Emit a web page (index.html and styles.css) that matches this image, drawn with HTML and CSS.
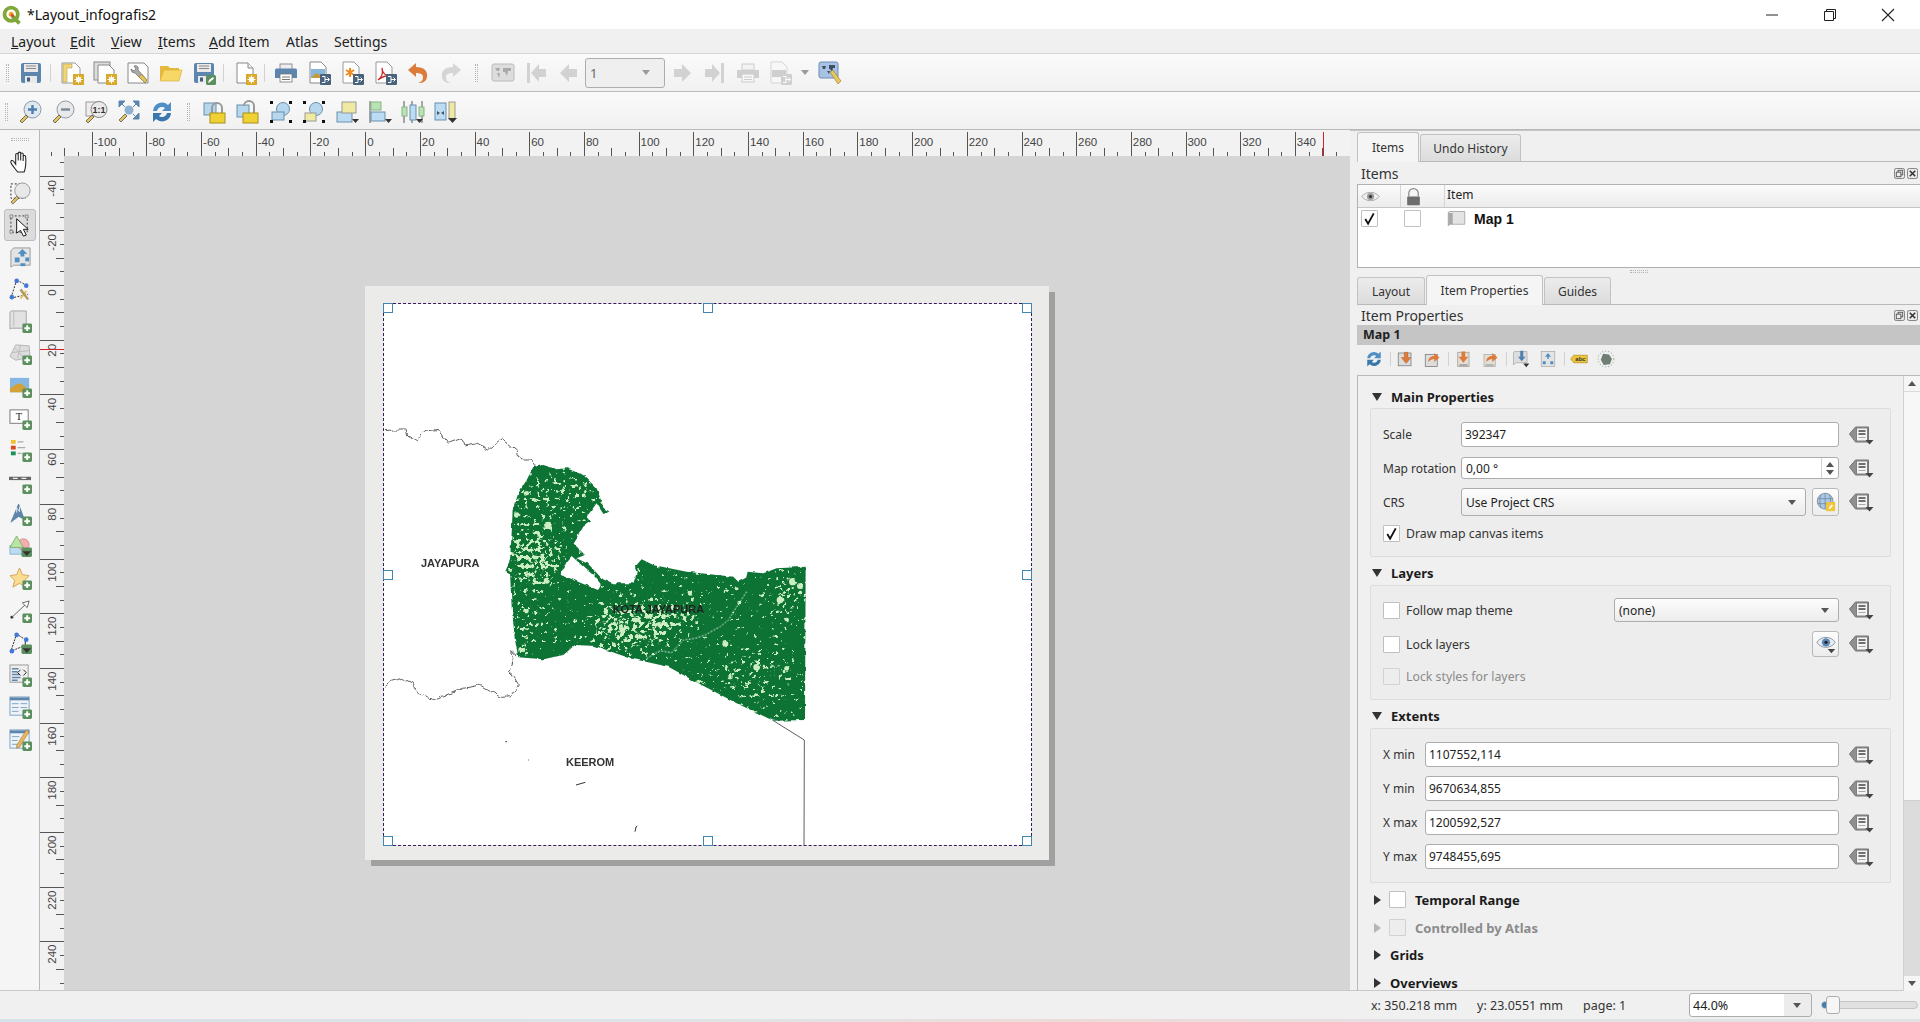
FILE: index.html
```html
<!DOCTYPE html>
<html lang="en">
<head>
    <meta charset="UTF-8">
    <title>*Layout_infografis2</title>
    <link rel="stylesheet" href="styles.css">
</head>
<body>

<svg class="sprite" xmlns="http://www.w3.org/2000/svg">
    <!-- badges -->
    <symbol id="b-plus" viewBox="0 0 24 24"><rect x="14" y="14" width="10" height="10" rx="1.5" fill="#5b8f5e"/><path d="M19 16v6M16 19h6" stroke="#fff" stroke-width="2"/></symbol>
    <symbol id="b-plus-dd" viewBox="0 0 24 24"><rect x="13" y="13" width="11" height="10" rx="1.5" fill="#5b8f5e"/><path d="M14 17h9l-4.500 5z" fill="#333"/></symbol>
    <symbol id="b-gear" viewBox="0 0 24 24"><rect x="13" y="13" width="11" height="11" fill="#d8a928"/><circle cx="18.500" cy="18.500" r="2.500" fill="#fff"/><path d="M18.500 14.500v8M14.500 18.500h8M15.700 15.700l5.600 5.600M21.300 15.700l-5.600 5.600" stroke="#fff"/></symbol>
    <symbol id="b-export" viewBox="0 0 24 24"><rect x="13" y="13" width="11" height="11" rx="1" fill="#4a637d"/><path d="M15 15.500h3v6h-3M18 18.500h4M20.500 16.500l2 2-2 2" fill="none" stroke="#fff"/></symbol>
    <!-- main toolbars -->
    <symbol id="i-save" viewBox="0 0 24 24"><rect x="2" y="2" width="20" height="20" rx="2" fill="#5d86ae"/><rect x="5" y="3" width="14" height="8" fill="#e9e9e9"/><path d="M7 5h10M7 7.500h10" stroke="#8a8a8a"/><rect x="6" y="15" width="12" height="7" fill="#e9e9e9"/><rect x="8" y="16.500" width="3" height="4" fill="#3f5f80"/></symbol>
    <symbol id="i-saveas" viewBox="0 0 24 24"><use href="#i-save"/><rect x="14" y="14" width="10" height="10" rx="1.500" fill="#5b8f5e"/><path d="M16 22l1-3 4-3 1 1.500-4 3.500z" fill="#fff"/></symbol>
    <symbol id="i-newlayout" viewBox="0 0 24 24"><path d="M2 2h13l5 5v15H2z" fill="#fff" stroke="#999"/><path d="M3 3h9v4H7v14H3z" fill="#f0d676" stroke="#b8a14a" stroke-width=".6"/><use href="#b-gear"/></symbol>
    <symbol id="i-duplicate" viewBox="0 0 24 24"><rect x="1" y="1" width="16" height="18" fill="#ddd" stroke="#888"/><path d="M5 4h11l5 5v13H5z" fill="#fff" stroke="#888"/><use href="#b-gear"/></symbol>
    <symbol id="i-manager" viewBox="0 0 24 24"><path d="M2 2h16l4 4v16H2z" fill="#fff" stroke="#888"/><path d="M8 5c3-1 5 1 4 4l9 10-2 3-10-10c-3 0-4-2-4-4l3 2 2-2z" fill="#aaa" stroke="#555" stroke-width=".6"/><path d="M15 13l6 6-2 3-6-6z" fill="#e3c35a" stroke="#8e7a33" stroke-width=".6"/></symbol>
    <symbol id="i-open" viewBox="0 0 24 24"><path d="M1 20V5h8l2 2h9v3H6z" fill="#e6b93f"/><path d="M1 20l4-11h18l-3 11z" fill="#f7d765" stroke="#d7ab35" stroke-width=".6"/></symbol>
    <symbol id="i-newreport" viewBox="0 0 24 24"><path d="M4 2h11l5 5v15H4z" fill="#fff" stroke="#888"/><path d="M15 2v5h5" fill="#eee" stroke="#888"/><use href="#b-gear"/></symbol>
    <symbol id="i-print" viewBox="0 0 24 24"><rect x="6" y="3" width="12" height="6" fill="#eee" stroke="#777" stroke-width=".8"/><path d="M1 9a1.500 1.500 0 0 1 1.500-1.500h19A1.500 1.500 0 0 1 23 9v8H1z" fill="#5c86ad"/><rect x="6" y="13" width="12" height="8" fill="#fff" stroke="#777" stroke-width=".8"/><path d="M8 16h8M8 18.500h8" stroke="#777"/></symbol>
    <symbol id="i-eximage" viewBox="0 0 24 24"><path d="M3 1h11l5 5v16H3z" fill="#fff" stroke="#888"/><rect x="4" y="8" width="14" height="9" fill="#87b6dc"/><path d="M4 17l5-5 4 2 5 3z" fill="#c6993a"/><use href="#b-export"/></symbol>
    <symbol id="i-exsvg" viewBox="0 0 24 24"><path d="M3 1h11l5 5v16H3z" fill="#fff" stroke="#999"/><path d="M10 7v9M6 9l8 5M14 9l-8 5" stroke="#f08a1d" stroke-width="2"/><use href="#b-export"/></symbol>
    <symbol id="i-expdf" viewBox="0 0 24 24"><path d="M3 1h11l5 5v16H3z" fill="#fff" stroke="#999"/><path d="M5 19c4-3 5-8 4-12 0 5 4 8 8 8-4-1-8 1-12 4z" fill="none" stroke="#c9282d" stroke-width="1.300"/><use href="#b-export"/></symbol>
    <symbol id="i-undo" viewBox="0 0 24 24"><path d="M2 9l8-7v4c8 0 12 4 11 10s-6 6-9 6c4-1 5-3 5-6s-3-4-7-4v4z" fill="#dd7b3a"/></symbol>
    <symbol id="i-redo" viewBox="0 0 24 24"><path d="M22 9l-8-7v4C6 6 2 10 3 16s6 6 9 6c-4-1-5-3-5-6s3-4 7-4v4z" fill="#d5d5d5"/></symbol>
    <symbol id="i-atlasprev" viewBox="0 0 24 24"><rect x="1" y="3" width="22" height="17" rx="2" fill="#ddd" stroke="#bbb"/><path d="M4 7h5l-1 3H6zM12 7h8v3h-3l-1 5-2-4h-2zM6 12l2 5 1-5z" fill="#a9a9a9"/></symbol>
    <symbol id="i-first" viewBox="0 0 24 24"><path d="M3 2h3v20H3zM7 12l8-9v5h7v8h-7v5z" fill="#d2d2d2"/></symbol>
    <symbol id="i-prev" viewBox="0 0 24 24"><path d="M3 12l9-9v5h8v8h-8v5z" fill="#d2d2d2"/></symbol>
    <symbol id="i-next" viewBox="0 0 24 24"><path d="M21 12l-9-9v5H4v8h8v5z" fill="#d2d2d2"/></symbol>
    <symbol id="i-last" viewBox="0 0 24 24"><path d="M21 2h-3v20h3zM17 12l-8-9v5H2v8h7v5z" fill="#d2d2d2"/></symbol>
    <symbol id="i-printoff" viewBox="0 0 24 24"><rect x="6" y="3" width="12" height="6" fill="#f3f3f3" stroke="#ccc"/><path d="M1 9h22v8H1z" fill="#cfcfcf"/><rect x="6" y="13" width="12" height="8" fill="#f7f7f7" stroke="#ccc"/><path d="M8 16h8M8 18.500h8" stroke="#ccc"/></symbol>
    <symbol id="i-exportoff" viewBox="0 0 24 24"><path d="M2 1h11l5 5v16H2z" fill="#f7f7f7" stroke="#d5d5d5"/><rect x="3" y="9" width="14" height="7" fill="#cfcfcf"/><rect x="12" y="13" width="11" height="11" rx="1" fill="#d0d0d0"/><path d="M14 15.500h3v6h-3M17 18.500h4M19.500 16.500l2 2-2 2" fill="none" stroke="#fff"/></symbol>
    <symbol id="i-atlasset" viewBox="0 0 24 24"><rect x="1" y="1" width="19" height="16" rx="2" fill="#a7c2e3" stroke="#6d8db3"/><path d="M4 5h4l-1 3H5zM11 4h6v3h-2l-1 4-2-3h-1zM9 10l2 3 1-3z" fill="#3d4f66"/><path d="M12 11l3-2 8 11-3 3z" fill="#e9c65c" stroke="#8e7a33" stroke-width=".6"/></symbol>
    <symbol id="i-zoomin" viewBox="0 0 24 24"><circle cx="14.500" cy="9.500" r="8.500" fill="#dfe7ef" stroke="#8a99a8"/><path d="M14.500 5v9M10 9.500h9" stroke="#4d7fb0" stroke-width="2.400"/><path d="M8 15l-6 6 2 2 6-6z" fill="#e3c35a" stroke="#444" stroke-width=".7"/></symbol>
    <symbol id="i-zoomout" viewBox="0 0 24 24"><circle cx="14.500" cy="9.500" r="8.500" fill="#e9e9e9" stroke="#8a99a8"/><path d="M10 9.500h9" stroke="#7b8996" stroke-width="2.400"/><path d="M8 15l-6 6 2 2 6-6z" fill="#e3c35a" stroke="#444" stroke-width=".7"/></symbol>
    <symbol id="i-zoomact" viewBox="0 0 24 24"><rect x="2" y="2" width="14" height="14" fill="#eee" stroke="#999"/><circle cx="15" cy="9.500" r="8" fill="#e9e9e9" stroke="#888"/><path d="M8 15l-6 6 2 2 6-6z" fill="#e3c35a" stroke="#444" stroke-width=".7"/><text x="15" y="13" font-family="Liberation Sans" font-size="9" font-weight="700" text-anchor="middle" fill="#333">1:1</text></symbol>
    <symbol id="i-zoomfull" viewBox="0 0 24 24"><path d="M2 1h6L2 7zM22 1h-6l6 6zM22 19h-6l6-6zM8 7l-4-4M16 7l4-4M16 14l4 4" fill="#5d86ae" stroke="#5d86ae"/><circle cx="12" cy="10" r="4.500" fill="#8fb0cf"/><path d="M8 14l-6 6 2 2 6-6z" fill="#e3c35a" stroke="#444" stroke-width=".7"/></symbol>
    <symbol id="i-refresh" viewBox="0 0 24 24"><path d="M3 11a9 9 0 0 1 15-6l3-3v9h-9l3-3a5 5 0 0 0-8 3z" fill="#4f8fc6"/><path d="M21 13a9 9 0 0 1-15 6l-3 3v-9h9l-3 3a5 5 0 0 0 8-3z" fill="#3a77ad"/></symbol>
    <symbol id="i-lock" viewBox="0 0 24 24"><rect x="1" y="3" width="12" height="12" fill="#b6d7ee" stroke="#6a8fab"/><path d="M9 14V8a5 5 0 0 1 10 0v6" fill="none" stroke="#999" stroke-width="2"/><rect x="7" y="13" width="15" height="10" fill="#f0d133" stroke="#a8901c"/></symbol>
    <symbol id="i-unlock" viewBox="0 0 24 24"><rect x="1" y="5" width="12" height="12" fill="#b6d7ee" stroke="#6a8fab"/><path d="M8 6a5 5 0 0 1 10 0v7" fill="none" stroke="#999" stroke-width="2"/><rect x="7" y="13" width="15" height="10" fill="#f0d133" stroke="#a8901c"/></symbol>
    <symbol id="i-group" viewBox="0 0 24 24"><circle cx="14" cy="9" r="6.500" fill="#b6d7ee" stroke="#6a8fab"/><rect x="3" y="12" width="12" height="8" fill="#b6d7ee" stroke="#6a8fab"/><path d="M1 1h3v3H1zM20 1h3v3h-3zM1 20h3v3H1zM20 20h3v3h-3z" fill="#111"/></symbol>
    <symbol id="i-ungroup" viewBox="0 0 24 24"><circle cx="14" cy="9" r="6.500" fill="#b6d7ee" stroke="#6a8fab"/><rect x="3" y="13" width="11" height="8" fill="#efe9a2" stroke="#999"/><path d="M1 1h3v3H1zM20 1h3v3h-3zM1 20h3v3H1zM20 20h3v3h-3z" fill="#111"/></symbol>
    <symbol id="i-raise" viewBox="0 0 24 24"><rect x="2" y="12" width="15" height="10" fill="#bcdcf3" stroke="#6a8fab"/><rect x="7" y="2" width="14" height="11" fill="#efe9a2" stroke="#999"/><path d="M17 19h7l-3.500 4z" fill="#333"/></symbol>
    <symbol id="i-align" viewBox="0 0 24 24"><path d="M2 1v22" stroke="#555"/><rect x="3" y="2" width="10" height="8" fill="#b8e4b4" stroke="#8ab386"/><rect x="3" y="12" width="14" height="9" fill="#bcdcf3" stroke="#6a8fab"/><path d="M17 19h7l-3.500 4z" fill="#333"/></symbol>
    <symbol id="i-distribute" viewBox="0 0 24 24"><path d="M3 1v22M11 1v22M21 1v22" stroke="#555"/><rect x="1" y="7" width="5" height="9" fill="#b8e4b4" stroke="#8ab386"/><rect x="9" y="5" width="6" height="15" fill="#bcdcf3" stroke="#6a8fab"/><rect x="18" y="7" width="5" height="9" fill="#b8e4b4" stroke="#8ab386"/><path d="M15 19h7l-3.500 4z" fill="#333"/></symbol>
    <symbol id="i-resize" viewBox="0 0 24 24"><rect x="1" y="3" width="11" height="17" fill="#bcdcf3" stroke="#6a8fab"/><path d="M3 11l3 2-3 2zM10 11l-3 2 3 2z" fill="#456"/><rect x="15" y="2" width="6" height="17" fill="#efe9a2" stroke="#999"/><path d="M14 18h9l-4.500 5z" fill="#333"/></symbol>
    <!-- left toolbar -->
    <symbol id="i-pan" viewBox="0 0 24 24"><path d="M9 23c-2-3-6-7-7-10-.5-2 1-3 3-1l2 3V5a1.300 1.300 0 0 1 2.600 0v6V3.500a1.300 1.300 0 0 1 2.600 0V11V4.500a1.300 1.300 0 0 1 2.600 0V11.500V7a1.300 1.300 0 0 1 2.600 0c.4 5 .6 10-1.600 16z" fill="#fff" stroke="#222" stroke-width="1.100"/></symbol>
    <symbol id="i-zoombox" viewBox="0 0 24 24"><rect x="2" y="2" width="15" height="15" fill="none" stroke="#222" stroke-dasharray="2 2"/><circle cx="14" cy="9" r="8" fill="#e8e8e8" stroke="#999"/><path d="M8 15l-6 6 2 2 6-6z" fill="#e3c35a" stroke="#444" stroke-width=".7"/></symbol>
    <symbol id="i-select" viewBox="0 0 24 24"><rect x="2" y="2" width="17" height="17" fill="none" stroke="#333" stroke-dasharray="2 2"/><path d="M1 1h3v3H1zM17 1h3v3h-3zM1 17h3v3H1z" fill="#dde" stroke="#556" stroke-width=".6"/><path d="M8 5v15l4-3 3 6 3-1-3-6h5z" fill="#fff" stroke="#111"/></symbol>
    <symbol id="i-movecontent" viewBox="0 0 24 24"><path d="M2 5l3-3h17v18H5l-3 2z" fill="#e4e4e4" stroke="#999"/><path d="M14 3l5 5h-3v3h-4V8H9z" fill="#4f8fc6"/><rect x="6" y="12" width="5" height="5" fill="#4f8fc6"/><rect x="17" y="12" width="4" height="4" fill="#4f8fc6"/><rect x="12" y="18" width="5" height="3" fill="#4f8fc6"/></symbol>
    <symbol id="i-nodes" viewBox="0 0 24 24"><path d="M8 2l9 5M8 2L2 21M2 21L20 17" fill="none" stroke="#222" stroke-dasharray="2 1.500"/><circle cx="8" cy="3" r="2.400" fill="#3f78d8"/><circle cx="18" cy="8" r="2.400" fill="#3f78d8"/><circle cx="3" cy="20" r="2.400" fill="#3f78d8"/><path d="M11 21l6-8 2 1-6 8z" fill="#e3c35a"/><path d="M13 11l8 11-2 1-8-10z" fill="#b39868"/></symbol>
    <symbol id="i-addmap" viewBox="0 0 24 24"><path d="M1 20V3a2 2 0 0 1 2-2h15v18H4a3 2 0 0 0-3 1z" fill="#e2e2e2" stroke="#a5a5a5"/><path d="M5 1v16" stroke="#bbb"/><use href="#b-plus"/></symbol>
    <symbol id="i-add3d" viewBox="0 0 24 24"><path d="M1 15L7 3l14 1 1 12-15 3z" fill="#ddd" stroke="#b5b5b5"/><path d="M6 6l9 10M12 3l-3 14M3 11l18-2" stroke="#bbb"/><use href="#b-plus"/></symbol>
    <symbol id="i-addpic" viewBox="0 0 24 24"><rect x="1" y="3" width="20" height="15" fill="#84b8e2"/><path d="M1 18V14c5-4 9-6 12-5l8 7v2z" fill="#d4a138"/><use href="#b-plus"/></symbol>
    <symbol id="i-addlabel" viewBox="0 0 24 24"><rect x="1" y="3" width="19" height="14" fill="#fff" stroke="#777"/><text x="10.500" y="14" font-family="Liberation Serif" font-size="11" text-anchor="middle" fill="#222">T</text><use href="#b-plus"/></symbol>
    <symbol id="i-addlegend" viewBox="0 0 24 24"><rect x="2" y="1" width="5" height="4" fill="#f2c12e"/><rect x="2" y="7" width="5" height="4" fill="#d8491f"/><rect x="2" y="13" width="5" height="4" fill="#16915a"/><path d="M9 3h6M9 9h8M9 15h4" stroke="#aaa" stroke-width="1.500"/><use href="#b-plus"/></symbol>
    <symbol id="i-addscale" viewBox="0 0 24 24"><rect x="0" y="6" width="23" height="3.500" fill="#666"/><path d="M4 7.700h5M13 7.700h5" stroke="#eee" stroke-width="1.400"/><use href="#b-plus"/></symbol>
    <symbol id="i-addnorth" viewBox="0 0 24 24"><path d="M2 20L10 1l6 16-6-3z" fill="#5d86ae" stroke="#456b8f" stroke-width=".6"/><path d="M8 10V5l3 4V4" stroke="#fff" fill="none" stroke-width=".8"/><use href="#b-plus"/></symbol>
    <symbol id="i-addshape" viewBox="0 0 24 24"><rect x="1" y="11" width="14" height="9" fill="#bcdcf3" stroke="#8fb3cf"/><circle cx="15" cy="10" r="6" fill="#f2aeae" stroke="#d29090"/><path d="M8 1l7 12H1z" fill="#b8e4a4" stroke="#85b373"/><use href="#b-plus-dd"/></symbol>
    <symbol id="i-addmarker" viewBox="0 0 24 24"><path d="M11 1l3 7 7 1-5 5 1 7-6-4-7 4 2-7-5-5 7-1z" fill="#f9dd92" stroke="#d8a158"/><use href="#b-plus"/></symbol>
    <symbol id="i-addarrow" viewBox="0 0 24 24"><circle cx="3" cy="18" r="1.500" fill="#333"/><path d="M3 18L18 4" stroke="#666"/><path d="M21 1l-7 2 5 5z" fill="#fff" stroke="#666"/><use href="#b-plus"/></symbol>
    <symbol id="i-addnodes" viewBox="0 0 24 24"><path d="M8 2l9 6M8 2L2 20L17 14" fill="none" stroke="#222" stroke-dasharray="2 1"/><path d="M17 8L17 14" stroke="#222"/><circle cx="8" cy="3" r="2.400" fill="#3f78d8"/><circle cx="18" cy="8" r="2.400" fill="#3f78d8"/><circle cx="3" cy="20" r="2.400" fill="#3f78d8"/><use href="#b-plus-dd"/></symbol>
    <symbol id="i-addhtml" viewBox="0 0 24 24"><rect x="1" y="1" width="19" height="18" fill="#eee" stroke="#999"/><path d="M3 5h7M3 8h6M3 11h8M3 14h9M3 17h6" stroke="#5d86ae" stroke-width="1.500"/><path d="M12 6l-3 3 3 3M15 6l3 3-3 3" fill="none" stroke="#222"/><use href="#b-plus"/></symbol>
    <symbol id="i-addtable" viewBox="0 0 24 24"><rect x="1" y="1" width="20" height="19" fill="#eef3f8" stroke="#7ea2c4"/><path d="M1 3h20" stroke="#5d86ae" stroke-width="3"/><path d="M3 8h7M12 8h7M3 12h7M12 12h7M3 16h7" stroke="#7ea2c4"/><use href="#b-plus"/></symbol>
    <symbol id="i-addattr" viewBox="0 0 24 24"><rect x="1" y="2" width="20" height="19" fill="#eef3f8" stroke="#7ea2c4"/><path d="M1 4h20" stroke="#5d86ae" stroke-width="3"/><path d="M3 9h8M3 13h6M3 17h6" stroke="#7ea2c4"/><path d="M8 18l10-16 3 2-10 16-3 1z" fill="#e9b45c" stroke="#94692c" stroke-width=".5"/><use href="#b-plus"/></symbol>
    <!-- panels -->
    <symbol id="i-eye" viewBox="0 0 24 24"><path d="M1 12c5-7 17-7 22 0-5 7-17 7-22 0z" fill="#f0f0f0" stroke="#999"/><circle cx="12" cy="12" r="4.500" fill="#999"/><circle cx="12" cy="12" r="2" fill="#333"/></symbol>
    <symbol id="i-padlock" viewBox="0 0 24 24"><path d="M6 12V8a6 6 0 0 1 12 0v4" fill="none" stroke="#8a8a8a" stroke-width="1.500"/><rect x="4" y="12" width="16" height="11" rx="1" fill="#6d6d6d"/></symbol>
    <symbol id="i-mapitem" viewBox="0 0 24 24"><path d="M1 21V4a2 2 0 0 1 2-2h20v17H4a3 2 0 0 0-3 2z" fill="#e4e4e4" stroke="#9b9b9b"/><path d="M1 4h6v15H4l-3 2z" fill="#a9a9a9"/></symbol>
    <symbol id="i-dockfloat" viewBox="0 0 12 12"><rect x=".5" y=".5" width="11" height="11" rx="2" fill="#ececec" stroke="#777"/><rect x="4.500" y="2.500" width="5" height="5" fill="none" stroke="#555"/><rect x="2.500" y="4.500" width="5" height="5" fill="#ececec" stroke="#555"/></symbol>
    <symbol id="i-dockclose" viewBox="0 0 12 12"><rect x=".5" y=".5" width="11" height="11" rx="2" fill="#ececec" stroke="#777"/><path d="M3 3l6 6M9 3l-6 6" stroke="#333" stroke-width="1.700"/></symbol>
    <symbol id="i-setextent" viewBox="0 0 24 24"><rect x="3" y="4" width="17" height="17" fill="#ddd" stroke="#777"/><path d="M11 3h5v7h4l-6.500 8L7 10h4z" fill="#dd7b3a" stroke="#a85520" stroke-width=".5"/></symbol>
    <symbol id="i-viewextent" viewBox="0 0 24 24"><rect x="3" y="6" width="16" height="16" fill="#ddd" stroke="#777"/><path d="M7 16c0-5 3-8 8-8V4l7 6-7 6v-4c-3 0-5 1-8 4z" fill="#dd7b3a"/></symbol>
    <symbol id="i-setscale" viewBox="0 0 24 24"><rect x="5" y="3" width="15" height="19" fill="#e3dfd6" stroke="#999"/><path d="M10 2h5v7h4l-6.500 8L6 9h4z" fill="#dd7b3a"/><path d="M7 20h11" stroke="#555"/></symbol>
    <symbol id="i-viewscale" viewBox="0 0 24 24"><rect x="4" y="6" width="15" height="16" fill="#e3dfd6" stroke="#aaa"/><path d="M7 16c0-5 3-8 8-8V4l7 6-7 6v-4c-3 0-5 1-8 4z" fill="#dd7b3a"/><path d="M6 20h11" stroke="#777"/></symbol>
    <symbol id="i-bookmark" viewBox="0 0 24 24"><path d="M2 20V4a2 2 0 0 1 2-2h16v15H5z" fill="#ddd" stroke="#aaa"/><path d="M11 1h4v8h3l-5 6-5-6h3z" fill="#4f7fb0"/><path d="M15 18h8l-4 5z" fill="#333"/></symbol>
    <symbol id="i-interactive" viewBox="0 0 24 24"><rect x="3" y="2" width="18" height="20" fill="#e4e4e4" stroke="#aaa"/><path d="M12 4l4 5h-3v3h-2V9H8z" fill="#4f8fc6"/><path d="M5 15h4v4H5zM15 15h4v4h-4z" fill="#4f8fc6"/></symbol>
    <symbol id="i-labels" viewBox="0 0 24 24"><path d="M1 12l4-5h18v10H5z" fill="#edc63a" stroke="#b1921d"/><text x="14" y="15" font-family="Liberation Sans" font-size="8" font-weight="700" text-anchor="middle" fill="#333">abc</text></symbol>
    <symbol id="i-clip" viewBox="0 0 24 24"><path d="M8 5l8 1 4 6-3 7-8 1-4-7z" fill="#6f7f74"/><circle cx="12" cy="12" r="10.500" fill="none" stroke="#a6b5a9" stroke-dasharray="1.500 2.500" stroke-width="1.500"/></symbol>
    <symbol id="i-dd" viewBox="0 0 26 20"><path d="M1 9l6-7h13v15H7z" fill="#8f8f8f" stroke="#747474"/><rect x="8" y="3" width="11" height="13" fill="#f4f4f4" stroke="#808080"/><path d="M10 6h7M10 9h7" stroke="#444" stroke-width="1.300"/><path d="M10 12.500h7" stroke="#aaa"/><path d="M17 15h8l-4 4.500z" fill="#444"/></symbol>
    <symbol id="i-crs" viewBox="0 0 24 24"><circle cx="11" cy="11" r="9.500" fill="#a9c9e6" stroke="#7e8d9b"/><path d="M2 8h18M2 14h18M11 1.500v19M6 3c-2 5-2 11 0 16M16 3c2 5 2 11 0 16" stroke="#6d7f90" fill="none" stroke-width=".8"/><rect x="12" y="12" width="11" height="11" fill="#efc53a"/><path d="M15 21l1-3 3-3 1.500 1.500-3 3z" fill="#fff"/></symbol>
    <symbol id="i-eyeblue" viewBox="0 0 24 24"><path d="M1 10c5-8 17-8 22 0-5 8-17 8-22 0z" fill="#e8eef5" stroke="#7d8b99"/><circle cx="12" cy="10" r="5" fill="#5d86ae"/><circle cx="12" cy="10" r="2" fill="#223"/><path d="M14 18h9l-4.500 5z" fill="#444"/></symbol>
</svg>

<div class="titlebar">
    <svg class="app-logo" viewBox="0 0 24 24"><circle cx="11" cy="11" r="8" fill="none" stroke="#7fa73a" stroke-width="4.500"/><circle cx="11" cy="11" r="3" fill="#f0a42c"/><path d="M12 13l9 9" stroke="#7fa73a" stroke-width="4.500"/><path d="M11 11l3 3" stroke="#d8452a" stroke-width="2.500"/></svg>
    <span class="title-text">*Layout_infografis2</span>
    <div class="window-btns">
        <svg class="win-ico" viewBox="0 0 14 14"><path d="M1 7h12" stroke="#222"/></svg>
        <svg class="win-ico" viewBox="0 0 14 14"><path d="M3.500 3.500v-2h9v9h-2M1.500 3.500h9v9h-9z" fill="none" stroke="#222"/></svg>
        <svg class="win-ico" viewBox="0 0 14 14"><path d="M1 1l12 12M13 1L1 13" stroke="#222" stroke-width="1.100"/></svg>
    </div>
</div>

<div class="menubar">
    <span class="menu-item m-layout"><u>L</u>ayout</span>
    <span class="menu-item m-edit"><u>E</u>dit</span>
    <span class="menu-item m-view"><u>V</u>iew</span>
    <span class="menu-item m-items"><u>I</u>tems</span>
    <span class="menu-item m-add"><u>A</u>dd Item</span>
    <span class="menu-item m-atlas">Atlas</span>
    <span class="menu-item">Settings</span>
</div>

<div class="toolbar toolbar-main">
    <span class="grip"></span>
    <span class="tool"><svg><use href="#i-save"/></svg></span>
    <span class="tool-sep"></span>
    <span class="tool"><svg><use href="#i-newlayout"/></svg></span>
    <span class="tool"><svg><use href="#i-duplicate"/></svg></span>
    <span class="tool"><svg><use href="#i-manager"/></svg></span>
    <span class="tool"><svg><use href="#i-open"/></svg></span>
    <span class="tool"><svg><use href="#i-saveas"/></svg></span>
    <span class="tool-sep"></span>
    <span class="tool"><svg><use href="#i-newreport"/></svg></span>
    <span class="tool-sep"></span>
    <span class="tool"><svg><use href="#i-print"/></svg></span>
    <span class="tool"><svg><use href="#i-eximage"/></svg></span>
    <span class="tool"><svg><use href="#i-exsvg"/></svg></span>
    <span class="tool"><svg><use href="#i-expdf"/></svg></span>
    <span class="tool"><svg><use href="#i-undo"/></svg></span>
    <span class="tool"><svg><use href="#i-redo"/></svg></span>
    <span class="tool-grip atlas-grip"><span class="grip"></span></span>
    <span class="tool"><svg><use href="#i-atlasprev"/></svg></span>
    <span class="tool"><svg><use href="#i-first"/></svg></span>
    <span class="tool"><svg><use href="#i-prev"/></svg></span>
    <span class="atlas-combo"><span>1</span><i class="arrow-down arrow-grey"></i></span>
    <span class="tool"><svg><use href="#i-next"/></svg></span>
    <span class="tool"><svg><use href="#i-last"/></svg></span>
    <span class="tool"><svg><use href="#i-printoff"/></svg></span>
    <span class="tool"><svg><use href="#i-exportoff"/></svg></span>
    <span class="tool-arrow"><i class="arrow-down arrow-grey"></i></span>
    <span class="tool"><svg><use href="#i-atlasset"/></svg></span>
</div>

<div class="toolbar toolbar-second">
    <span class="grip"></span>
    <span class="tool"><svg><use href="#i-zoomin"/></svg></span>
    <span class="tool"><svg><use href="#i-zoomout"/></svg></span>
    <span class="tool"><svg><use href="#i-zoomact"/></svg></span>
    <span class="tool"><svg><use href="#i-zoomfull"/></svg></span>
    <span class="tool"><svg><use href="#i-refresh"/></svg></span>
    <span class="tool-grip wide"><span class="grip"></span></span>
    <span class="tool"><svg><use href="#i-lock"/></svg></span>
    <span class="tool"><svg><use href="#i-unlock"/></svg></span>
    <span class="tool"><svg><use href="#i-group"/></svg></span>
    <span class="tool"><svg><use href="#i-ungroup"/></svg></span>
    <span class="tool"><svg><use href="#i-raise"/></svg></span>
    <span class="tool"><svg><use href="#i-align"/></svg></span>
    <span class="tool"><svg><use href="#i-distribute"/></svg></span>
    <span class="tool"><svg><use href="#i-resize"/></svg></span>
</div>

<div class="workspace">

    <div class="left-tools">
        <span class="grip-h"></span>
        <span class="side-tool"><svg><use href="#i-pan"/></svg></span>
        <span class="side-tool"><svg><use href="#i-zoombox"/></svg></span>
        <span class="side-tool active"><svg><use href="#i-select"/></svg></span>
        <span class="side-tool"><svg><use href="#i-movecontent"/></svg></span>
        <span class="side-tool"><svg><use href="#i-nodes"/></svg></span>
        <span class="side-tool"><svg><use href="#i-addmap"/></svg></span>
        <span class="side-tool"><svg><use href="#i-add3d"/></svg></span>
        <span class="side-tool"><svg><use href="#i-addpic"/></svg></span>
        <span class="side-tool"><svg><use href="#i-addlabel"/></svg></span>
        <span class="side-tool"><svg><use href="#i-addlegend"/></svg></span>
        <span class="side-tool"><svg><use href="#i-addscale"/></svg></span>
        <span class="side-tool"><svg><use href="#i-addnorth"/></svg></span>
        <span class="side-tool"><svg><use href="#i-addshape"/></svg></span>
        <span class="side-tool"><svg><use href="#i-addmarker"/></svg></span>
        <span class="side-tool"><svg><use href="#i-addarrow"/></svg></span>
        <span class="side-tool"><svg><use href="#i-addnodes"/></svg></span>
        <span class="side-tool"><svg><use href="#i-addhtml"/></svg></span>
        <span class="side-tool"><svg><use href="#i-addtable"/></svg></span>
        <span class="side-tool"><svg><use href="#i-addattr"/></svg></span>
    </div>

    <div class="canvas-area">
        <div class="ruler-h">
            <div class="ruler-h-ticks">
                <span></span><span>-100</span><span>-80</span><span>-60</span><span>-40</span><span>-20</span><span>0</span><span>20</span><span>40</span><span>60</span><span>80</span><span>100</span><span>120</span><span>140</span><span>160</span><span>180</span><span>200</span><span>220</span><span>240</span><span>260</span><span>280</span><span>300</span><span>320</span><span>340</span>
            </div>
            <i class="marker-h"></i>
        </div>
        <div class="canvas-row">
            <div class="ruler-v">
                <div class="ruler-v-ticks">
                    <span></span><span>-40</span><span>-20</span><span>0</span><span>20</span><span>40</span><span>60</span><span>80</span><span>100</span><span>120</span><span>140</span><span>160</span><span>180</span><span>200</span><span>220</span><span>240</span>
                </div>
                <i class="marker-v"></i>
            </div>
            <div class="canvas">
                <div class="page">
                    <div class="map-frame">
                        <svg class="map-svg" viewBox="42 -318 1941 1623">
                            <defs>
                                <clipPath id="landClip"><path d="M490 170L520 165 560 178 590 175 640 195 680 235 700 290 718 305 700 312 680 280 650 320 660 335 640 350 610 400 645 435 620 445 655 462 695 505 730 520 790 520 800 490 795 470 815 448 850 465 950 485 1090 500 1105 515 1125 505 1130 485 1180 490 1220 475 1307 470 1305 930 1210 932 1100 880 985 820 895 770 780 745 675 708 615 705 580 735 520 748 445 742 435 690 425 590 420 490 405 483 420 450 425 370 428 300 445 250 470 210z"/></clipPath>
                                <clipPath id="eastEdge"><rect x="300" y="100" width="1007" height="900"/></clipPath>
                                <filter id="speckle" filterUnits="userSpaceOnUse" x="390" y="150" width="930" height="800" color-interpolation-filters="sRGB">
                                    <feGaussianBlur in="SourceAlpha" stdDeviation="30" result="density"/>
                                    <feTurbulence type="fractalNoise" baseFrequency="0.08" numOctaves="3" seed="11"/>
                                    <feColorMatrix type="matrix" values="0 0 0 0 0  0 0 0 0 0  0 0 0 0 0  1 0 0 0 0" result="noise"/>
                                    <feComposite in="noise" in2="density" operator="arithmetic" k1="0" k2="1" k3="0.24" k4="0"/>
                                    <feComponentTransfer result="mask"><feFuncA type="linear" slope="14" intercept="-9.900"/></feComponentTransfer>
                                    <feFlood flood-color="#cdeec0"/>
                                    <feComposite in2="mask" operator="in"/>
                                </filter>
                                <filter id="wiggleLand" filterUnits="userSpaceOnUse" x="380" y="130" width="960" height="840">
                                    <feTurbulence type="fractalNoise" baseFrequency="0.05" numOctaves="2" seed="4"/>
                                    <feDisplacementMap in="SourceGraphic" scale="10" xChannelSelector="R" yChannelSelector="G"/>
                                </filter>
                                <filter id="wiggleLine" filterUnits="userSpaceOnUse" x="0" y="20" width="520" height="880">
                                    <feTurbulence type="fractalNoise" baseFrequency="0.035" numOctaves="2" seed="9"/>
                                    <feDisplacementMap in="SourceGraphic" scale="22" xChannelSelector="R" yChannelSelector="G"/>
                                </filter>
                            </defs>
                            <g clip-path="url(#eastEdge)">
                                <g filter="url(#wiggleLand)">
                                    <path class="land" d="M490 170L520 165 560 178 590 175 640 195 680 235 700 290 718 305 700 312 680 280 650 320 660 335 640 350 610 400 645 435 620 445 655 462 695 505 730 520 790 520 800 490 795 470 815 448 850 465 950 485 1090 500 1105 515 1125 505 1130 485 1180 490 1220 475 1307 470 1305 930 1210 932 1100 880 985 820 895 770 780 745 675 708 615 705 580 735 520 748 445 742 435 690 425 590 420 490 405 483 420 450 425 370 428 300 445 250 470 210z"/>
                                    <g clip-path="url(#landClip)">
                                        <g filter="url(#speckle)">
                                            <ellipse cx="490" cy="440" rx="80" ry="90"/>
                                            <ellipse cx="560" cy="260" rx="110" ry="70" opacity=".5"/>
                                            <ellipse cx="780" cy="650" rx="120" ry="70"/>
                                            <ellipse cx="880" cy="620" rx="110" ry="40"/>
                                            <ellipse cx="1250" cy="560" rx="60" ry="60" opacity=".6"/>
                                            <ellipse cx="1160" cy="800" rx="120" ry="70" opacity=".5"/>
                                            <ellipse cx="480" cy="640" rx="60" ry="70" opacity=".5"/>
                                        </g>
                                        <g class="blobs">
                                            <circle cx="468" cy="602" r="8"/><circle cx="530" cy="512" r="9"/><circle cx="457" cy="720" r="9"/>
                                            <circle cx="1268" cy="515" r="11"/><circle cx="1290" cy="528" r="9"/><circle cx="1230" cy="570" r="10"/>
                                            <circle cx="1250" cy="630" r="7"/><circle cx="1066" cy="702" r="9"/><circle cx="985" cy="815" r="6"/>
                                            <circle cx="1160" cy="772" r="10"/><circle cx="1250" cy="775" r="7"/><circle cx="1080" cy="800" r="8"/>
                                            <circle cx="535" cy="345" r="10"/><circle cx="440" cy="315" r="8"/><circle cx="470" cy="250" r="7"/>
                                            <circle cx="960" cy="550" r="7"/><circle cx="1100" cy="535" r="6"/>
                                        </g>
                                    </g>
                                    <path class="lake" d="M572 495L590 455 605 438 640 470 672 497 692 522 684 540 640 522 600 505z"/>
                                </g>
                            </g>
                            <path class="river" d="M830 745L870 722 905 728 940 690 975 685 1005 675 1050 650 1075 630 1100 590 1130 545"/>
                            <g filter="url(#wiggleLine)">
                                <path class="border-line" d="M40 62L70 60 105 60 110 78 140 95 165 65 205 58 235 100 275 85 285 108 320 100 355 120 395 85 440 120 455 150 480 150 495 170"/>
                                <path class="border-line" d="M445 742L425 725 430 745 418 780 430 800 445 825 420 860 395 862 355 840 330 825 280 835 200 868 140 850 125 820 95 805 60 815 40 832"/>
                            </g>
                            <path class="border-line" d="M1210 932L1303 990 1302 1305"/>
                            <path class="specks" d="M406 995h5M474 1050h2M618 1125l28-8M795 1265l3-14 4-3"/>
                            <text class="map-label" x="153" y="471">JAYAPURA</text>
                            <text class="map-label over" x="728" y="609">KOTA JAYAPURA</text>
                            <text class="map-label" x="588" y="1067">KEEROM</text>
                        </svg>
                        <i class="handle h-tl"></i><i class="handle h-tc"></i><i class="handle h-tr"></i>
                        <i class="handle h-ml"></i><i class="handle h-mr"></i>
                        <i class="handle h-bl"></i><i class="handle h-bc"></i><i class="handle h-br"></i>
                    </div>
                </div>
            </div>
        </div>
    </div>

    <div class="dock">
        <div class="tabs tabs-top">
            <span class="tab active tab-items">Items</span>
            <span class="tab tab-undo">Undo History</span>
        </div>
        <div class="dock-title title-items">
            <span>Items</span>
            <span class="dock-btns"><svg><use href="#i-dockfloat"/></svg><svg><use href="#i-dockclose"/></svg></span>
        </div>
        <div class="item-table">
            <div class="item-head">
                <span class="col-vis"><svg class="head-ico"><use href="#i-eye"/></svg></span>
                <span class="col-lock"><svg class="head-ico"><use href="#i-padlock"/></svg></span>
                <span class="col-name">Item</span>
            </div>
            <div class="item-row">
                <span class="col-vis plain"><span class="check checked"><svg viewBox="0 0 16 16"><path d="M3.500 8.500l3 5 6-11" fill="none" stroke="#111" stroke-width="2"/></svg></span></span>
                <span class="col-lock plain"><span class="check"></span></span>
                <svg class="row-ico"><use href="#i-mapitem"/></svg>
                <b class="row-name">Map 1</b>
            </div>
        </div>
        <div class="dock-split"><span class="grip-h"></span></div>
        <div class="tabs tabs-props">
            <span class="tab tab-layout">Layout</span>
            <span class="tab active tab-props">Item Properties</span>
            <span class="tab tab-guides">Guides</span>
        </div>
        <div class="dock-title title-props">
            <span>Item Properties</span>
            <span class="dock-btns"><svg><use href="#i-dockfloat"/></svg><svg><use href="#i-dockclose"/></svg></span>
        </div>
        <div class="item-bar">Map 1</div>
        <div class="item-tools">
            <span class="mini"><svg><use href="#i-refresh"/></svg></span>
            <span class="mini-sep"></span>
            <span class="mini"><svg><use href="#i-setextent"/></svg></span>
            <span class="mini"><svg><use href="#i-viewextent"/></svg></span>
            <span class="mini-sep"></span>
            <span class="mini"><svg><use href="#i-setscale"/></svg></span>
            <span class="mini"><svg><use href="#i-viewscale"/></svg></span>
            <span class="mini-sep"></span>
            <span class="mini"><svg><use href="#i-bookmark"/></svg></span>
            <span class="mini"><svg><use href="#i-interactive"/></svg></span>
            <span class="mini-sep"></span>
            <span class="mini"><svg><use href="#i-labels"/></svg></span>
            <span class="mini"><svg><use href="#i-clip"/></svg></span>
        </div>

        <div class="props-frame">
            <div class="props-scroll">
                <div class="section-head first"><i class="tri-down"></i>Main Properties</div>
                <div class="group group-main">
                    <div class="row h25"><label class="lbl">Scale</label><span class="input">392347</span><svg class="dd"><use href="#i-dd"/></svg></div>
                    <div class="row h22"><label class="lbl">Map rotation</label><span class="input spin"><span class="spin-text">0,00 °</span><span class="spin-btns"><i class="arrow-up"></i><i class="arrow-down"></i></span></span><svg class="dd"><use href="#i-dd"/></svg></div>
                    <div class="row h28"><label class="lbl">CRS</label><span class="combo">Use Project CRS<i class="arrow-down"></i></span><span class="sq-btn"><svg><use href="#i-crs"/></svg></span><svg class="dd"><use href="#i-dd"/></svg></div>
                    <div class="row h16"><span class="check checked"><svg viewBox="0 0 16 16"><path d="M3.500 8.500l3 5 6-11" fill="none" stroke="#111" stroke-width="2"/></svg></span><span class="chk-label">Draw map canvas items</span></div>
                </div>

                <div class="section-head"><i class="tri-down"></i>Layers</div>
                <div class="group group-layers">
                    <div class="row h24"><span class="check"></span><span class="chk-label grow">Follow map theme</span><span class="combo theme-combo">(none)<i class="arrow-down"></i></span><svg class="dd"><use href="#i-dd"/></svg></div>
                    <div class="row h26"><span class="check"></span><span class="chk-label grow">Lock layers</span><span class="sq-btn"><svg><use href="#i-eyeblue"/></svg></span><svg class="dd"><use href="#i-dd"/></svg></div>
                    <div class="row h16"><span class="check off"></span><span class="chk-label muted">Lock styles for layers</span></div>
                </div>

                <div class="section-head"><i class="tri-down"></i>Extents</div>
                <div class="group group-extents">
                    <div class="row h25"><label class="lbl short">X min</label><span class="input">1107552,114</span><svg class="dd"><use href="#i-dd"/></svg></div>
                    <div class="row h25"><label class="lbl short">Y min</label><span class="input">9670634,855</span><svg class="dd"><use href="#i-dd"/></svg></div>
                    <div class="row h25"><label class="lbl short">X max</label><span class="input">1200592,527</span><svg class="dd"><use href="#i-dd"/></svg></div>
                    <div class="row h25"><label class="lbl short">Y max</label><span class="input">9748455,695</span><svg class="dd"><use href="#i-dd"/></svg></div>
                </div>

                <div class="collapsed first-collapsed"><i class="tri-right"></i><span class="check"></span>Temporal Range</div>
                <div class="collapsed muted"><i class="tri-right off"></i><span class="check off"></span>Controlled by Atlas</div>
                <div class="collapsed"><i class="tri-right"></i>Grids</div>
                <div class="collapsed"><i class="tri-right"></i>Overviews</div>
            </div>
            <div class="scrollbar">
                <span class="sb-btn"><i class="arrow-up"></i></span>
                <span class="sb-thumb"></span>
                <span class="sb-track"></span>
                <span class="sb-btn"><i class="arrow-down"></i></span>
            </div>
        </div>
    </div>
</div>

<div class="statusbar">
    <span class="st-x">x: 350.218 mm</span>
    <span class="st-y">y: 23.0551 mm</span>
    <span class="st-page">page: 1</span>
    <span class="zoom-combo">44.0%<i class="arrow-down"></i></span>
    <span class="zoom-slider"><i class="slider-fill"></i><i class="slider-knob"></i></span>
</div>
<div class="desktop-strip"></div>

</body>
</html>
```

FILE: styles.css
```css
* {
    box-sizing: border-box;
}

html, body {
    margin: 0;
    height: 1022px;
    overflow: hidden;
}

body {
    font-family: "Noto Sans", "Open Sans", sans-serif;
    font-size: 12px;
    color: #222;
    background-color: #f0f0f0;
}

.sprite {
    display: none;
}

/* title + menu */
.titlebar {
    height: 29px;
    background-color: #fff;
    display: flex;
    align-items: center;
    padding-left: 2px;
}

.app-logo {
    width: 20px;
    height: 20px;
}

.title-text {
    margin-left: 5px;
    font-size: 14px;
    color: #111;
}

.window-btns {
    margin-left: auto;
    display: flex;
    padding-right: 25px;
}

.win-ico {
    width: 14px;
    height: 14px;
    margin-left: 44px;
}

.menubar {
    height: 25px;
    display: flex;
    align-items: center;
    padding-left: 11px;
    font-size: 14px;
    border-bottom: 1px solid #d6d6d6;
    color: #222;
}

.menu-item {
    white-space: nowrap;
}

.m-layout { width: 59px; }
.m-edit { width: 41px; }
.m-view { width: 47px; }
.m-items { width: 51px; }
.m-add { width: 77px; }
.m-atlas { width: 48px; }

/* toolbars */
.toolbar {
    display: flex;
    align-items: center;
    border-bottom: 1px solid #b9b9b9;
    background: linear-gradient(#fafafa, #f1f1f1);
}

.toolbar-main {
    height: 38px;
    padding-left: 6px;
}

.toolbar-second {
    height: 38px;
    padding-left: 5px;
    padding-top: 2px;
}

.grip {
    width: 3px;
    height: 18px;
    flex: none;
    margin-right: 5px;
    border-left: 1px dotted #b5b5b5;
    border-right: 1px dotted #b5b5b5;
}

.tool {
    width: 33px;
    height: 30px;
    flex: none;
    display: flex;
    align-items: center;
    justify-content: center;
}

.tool svg {
    width: 24px;
    height: 24px;
}

.tool-sep {
    width: 8px;
    height: 22px;
    flex: none;
    position: relative;
}

.tool-sep::after {
    content: "";
    position: absolute;
    left: 3px;
    top: 2px;
    bottom: 2px;
    border-left: 1px solid #d2d2d2;
}

.tool-grip {
    width: 18px;
    flex: none;
    display: flex;
    justify-content: center;
}

.tool-grip.wide {
    width: 20px;
}

.tool-grip.atlas-grip {
    width: 19px;
}

.tool-grip .grip {
    margin-right: 0;
}

.tool-arrow {
    width: 16px;
    flex: none;
    display: flex;
    justify-content: center;
}

.atlas-combo {
    width: 80px;
    height: 30px;
    flex: none;
    display: flex;
    align-items: center;
    justify-content: space-between;
    padding: 0 14px 0 4px;
    background-color: #efefef;
    border: 1px solid #adadad;
    border-radius: 3px;
    color: #666;
    font-size: 13px;
}

/* triangles */
.arrow-down, .arrow-up {
    display: block;
    width: 0;
    height: 0;
    border-left: 4.500px solid transparent;
    border-right: 4.500px solid transparent;
}

.arrow-down {
    border-top: 5px solid #555;
}

.arrow-up {
    border-bottom: 5px solid #555;
}

.arrow-grey {
    border-top-color: #9a9a9a;
}

.tri-down, .tri-right {
    display: block;
    width: 0;
    height: 0;
    flex: none;
}

.tri-down {
    border-left: 5px solid transparent;
    border-right: 5px solid transparent;
    border-top: 8px solid #333;
    margin-right: 9px;
}

.tri-right {
    border-top: 5px solid transparent;
    border-bottom: 5px solid transparent;
    border-left: 7px solid #333;
    margin-left: 2px;
    margin-right: 9px;
}

.tri-right.off {
    border-left-color: #b5b5b5;
}

/* workspace */
.workspace {
    height: 860px;
    display: flex;
}

.left-tools {
    width: 40px;
    flex: none;
    border-right: 1px solid #b9b9b9;
    background-color: #f5f5f5;
    display: flex;
    flex-direction: column;
    align-items: center;
}

.left-tools .grip-h {
    margin: 8px 0 4px;
}

.grip-h {
    display: block;
    width: 18px;
    height: 3px;
    flex: none;
    border-top: 1px dotted #b5b5b5;
    border-bottom: 1px dotted #b5b5b5;
}

.side-tool {
    width: 32px;
    height: 32.150px;
    flex: none;
    display: flex;
    align-items: center;
    justify-content: center;
    border: 1px solid transparent;
    border-radius: 3px;
}

.side-tool svg {
    width: 23px;
    height: 23px;
    margin-left: 2px;
}

.side-tool.active {
    background-color: #dcdcdc;
    border-color: #bdbdbd;
}

.canvas-area {
    width: 1310px;
    flex: none;
    display: flex;
    flex-direction: column;
}

.ruler-h {
    height: 26px;
    flex: none;
    background-color: #f2f2f2;
    position: relative;
    overflow: hidden;
}

.ruler-h-ticks {
    display: flex;
    margin-left: -3px;
    height: 26px;
    width: 1400px;
    font-family: "Liberation Sans", sans-serif;
    font-size: 11.500px;
    line-height: 25px;
    color: #444;
    background-image:
        repeating-linear-gradient(90deg, #555 0 1px, transparent 1px 54.700px),
        repeating-linear-gradient(90deg, #555 0 1px, transparent 1px 27.350px),
        repeating-linear-gradient(90deg, #555 0 1px, transparent 1px 13.675px);
    background-repeat: no-repeat;
    background-position: left bottom;
    background-size: 100% 24px, 100% 8px, 100% 4px;
}

.ruler-h-ticks span {
    width: 54.700px;
    flex: none;
    padding-left: 2px;
}

.marker-h {
    position: absolute;
    left: 1283px;
    top: 2px;
    bottom: 0;
    border-left: 1px solid #d3202a;
}

.canvas-row {
    flex: 1;
    display: flex;
    min-height: 0;
}

.ruler-v {
    width: 24px;
    flex: none;
    background-color: #f2f2f2;
    position: relative;
    overflow: hidden;
}

.ruler-v-ticks {
    display: flex;
    flex-direction: column;
    margin-top: -35px;
    width: 24px;
    height: 900px;
    font-family: "Liberation Sans", sans-serif;
    font-size: 11.500px;
    color: #444;
    background-image:
        repeating-linear-gradient(180deg, #555 0 1px, transparent 1px 54.700px),
        repeating-linear-gradient(180deg, #555 0 1px, transparent 1px 27.350px),
        repeating-linear-gradient(180deg, #555 0 1px, transparent 1px 13.675px);
    background-repeat: no-repeat;
    background-position: right top;
    background-size: 24px 100%, 8px 100%, 4px 100%;
}

.ruler-v-ticks span {
    height: 54.700px;
    flex: none;
    writing-mode: vertical-rl;
    transform: rotate(180deg);
    text-align: right;
    padding-bottom: 4px;
    padding-right: 2px;
    line-height: 20px;
    width: 24px;
}

.marker-v {
    position: absolute;
    top: 193px;
    left: 0;
    right: 0;
    border-top: 1px solid #d3202a;
}

.canvas {
    flex: 1;
    background-color: #d5d5d5;
    padding: 130px 0 0 301px;
}

/* map page */
.page {
    width: 684px;
    height: 574px;
    padding: 18px 0 0 19px;
    background-color: #ebecea;
    box-shadow: 6px 6px 0 #a0a0a0;
}

.map-frame {
    width: 647px;
    height: 541px;
    background-color: #fff;
    position: relative;
    outline: 1px dashed #3a1a5c;
}

.map-svg {
    display: block;
    width: 647px;
    height: 541px;
}

.land {
    fill: #0d7336;
}

.lake {
    fill: #fff;
}

.blobs {
    fill: #cdeec0;
}

.river {
    fill: none;
    stroke: #fff;
    stroke-width: 3;
    stroke-dasharray: 5 5;
}

.border-line {
    fill: none;
    stroke: #5f5f5f;
    stroke-width: 3;
}

.specks {
    fill: none;
    stroke: #333;
    stroke-width: 3;
}

.map-label {
    font-family: "Liberation Sans", sans-serif;
    font-size: 33px;
    font-weight: 700;
    fill: #333;
}

.map-label.over {
    fill: #222;
}

.handle {
    position: absolute;
    width: 10px;
    height: 10px;
    border: 1px solid #3f86b0;
}

.h-tl { left: -1px; top: -1px; }
.h-tc { left: 319px; top: -1px; }
.h-tr { right: -1px; top: -1px; }
.h-ml { left: -1px; top: 266px; }
.h-mr { right: -1px; top: 266px; }
.h-bl { left: -1px; bottom: -1px; }
.h-bc { left: 319px; bottom: -1px; }
.h-br { right: -1px; bottom: -1px; }

/* right dock */
.dock {
    width: 570px;
    flex: none;
    padding-left: 7px;
    border-top: 1px solid #c4c4c4;
    display: flex;
    flex-direction: column;
}

.tabs {
    display: flex;
    align-items: flex-end;
    border-bottom: 1px solid #b9b9b9;
    flex: none;
}

.tabs-top {
    height: 31px;
}

.tabs-props {
    height: 30px;
}

.tab {
    height: 27px;
    display: flex;
    align-items: center;
    justify-content: center;
    background: linear-gradient(#ececec, #dcdcdc);
    border: 1px solid #c2c2c2;
    border-bottom: none;
    border-radius: 3px 3px 0 0;
    margin-right: 1px;
    color: #333;
}

.tab.active {
    background: #f5f5f5;
    margin-bottom: -1px;
    height: 30px;
}

.tab-items { width: 62px; }
.tab-undo { width: 101px; }
.tab-layout { width: 68px; }
.tab-props { width: 117px; }
.tab-guides { width: 67px; }

.dock-title {
    flex: none;
    display: flex;
    align-items: center;
    justify-content: space-between;
    padding-left: 4px;
    font-size: 14px;
    color: #333;
}

.title-items {
    height: 22px;
}

.title-props {
    height: 20px;
}

.dock-btns {
    display: flex;
    gap: 2px;
    padding-right: 2px;
}

.dock-btns svg {
    width: 11px;
    height: 11px;
}

.item-table {
    height: 84px;
    flex: none;
    background-color: #fff;
    border: 1px solid #b0b0b0;
    border-right: none;
}

.item-head {
    height: 23px;
    display: flex;
    align-items: stretch;
    background: linear-gradient(#fbfbfb, #ececec);
    border-bottom: 1px solid #c6c6c6;
}

.col-vis, .col-lock {
    width: 43px;
    flex: none;
    display: flex;
    align-items: center;
    padding-left: 3px;
    border-right: 1px solid #d4d4d4;
}

.col-lock {
    width: 44px;
}

.col-vis.plain, .col-lock.plain {
    border-right: none;
}

.col-name {
    padding: 0 0 3px 2px;
    display: flex;
    align-items: center;
}

.head-ico {
    width: 19px;
    height: 19px;
}

.item-row {
    height: 21px;
    display: flex;
    align-items: center;
}

.row-ico {
    width: 21px;
    height: 18px;
    margin-left: 1px;
}

.row-name {
    margin-left: 7px;
    font-family: "Liberation Sans", sans-serif;
    font-size: 14px;
    color: #111;
}

.dock-split {
    height: 7px;
    flex: none;
    display: flex;
    justify-content: center;
    align-items: center;
}

.item-bar {
    height: 20px;
    flex: none;
    padding-left: 6px;
    background-color: #c5c5c5;
    font-weight: 700;
    font-size: 12.500px;
    line-height: 20px;
    color: #222;
}

.item-tools {
    height: 30px;
    flex: none;
    display: flex;
    align-items: center;
    padding: 0 0 2px 6px;
}

.mini {
    width: 22px;
    height: 20px;
    flex: none;
    display: flex;
    align-items: center;
    justify-content: center;
    margin-right: 5px;
}

.mini svg {
    width: 18px;
    height: 18px;
}

.mini-sep {
    width: 1px;
    height: 14px;
    flex: none;
    background-color: #d2d2d2;
    margin: 0 3px 0 0;
}

.props-frame {
    height: 616px;
    flex: none;
    display: flex;
    border: 1px solid #b9b9b9;
    border-right: none;
    border-bottom: none;
}

.props-scroll {
    width: 545px;
    flex: none;
    overflow: hidden;
    padding-left: 12px;
}

.section-head {
    height: 20px;
    display: flex;
    align-items: center;
    padding-left: 2px;
    font-weight: 700;
    font-size: 13px;
    color: #1b1b1b;
    margin-top: 6px;
    margin-bottom: 1px;
}

.section-head.first {
    margin-top: 11px;
}

.group {
    width: 521px;
    background-color: #ededed;
    border: 1px solid #dddddd;
    border-radius: 2px;
    padding: 13px 0 0 12px;
    display: flex;
    flex-direction: column;
}

.group-main {
    height: 149px;
}

.group-layers {
    height: 115px;
    padding-top: 12px;
    margin-top: 2px;
}

.group-extents {
    height: 155px;
    margin-top: 2px;
    gap: 9px;
}

.group-main .h22 { margin-top: 10px; }
.group-main .h28 { margin-top: 9px; }
.group-main .h16 { margin-top: 9px; }
.group-layers .h26 { margin-top: 9px; }
.group-layers .h16 { margin-top: 11px; }

.row {
    display: flex;
    align-items: center;
    width: 492px;
    flex: none;
}

.h16 { height: 16px; }
.h22 { height: 22px; }
.h24 { height: 24px; }
.h25 { height: 25px; }
.h26 { height: 26px; }
.h28 { height: 28px; }

.lbl {
    width: 78px;
    flex: none;
    color: #333;
    white-space: nowrap;
}

.lbl.short {
    width: 42px;
}

.input {
    flex: 1;
    height: 100%;
    display: flex;
    align-items: center;
    padding-left: 3px;
    background-color: #fff;
    border: 1px solid #adadad;
    border-radius: 3px;
    color: #222;
}

.input.spin {
    padding-left: 0;
    justify-content: space-between;
}

.spin-text {
    padding-left: 4px;
}

.spin-btns {
    width: 17px;
    height: 100%;
    display: flex;
    flex-direction: column;
    align-items: center;
    justify-content: center;
    gap: 3px;
    border-left: 1px solid #d4d4d4;
}

.combo {
    flex: 1;
    height: 100%;
    display: flex;
    align-items: center;
    justify-content: space-between;
    padding: 0 9px 0 4px;
    background: linear-gradient(#fdfdfd, #ececec);
    border: 1px solid #adadad;
    border-radius: 3px;
    color: #222;
}

.theme-combo {
    flex: none;
    width: 225px;
}

.sq-btn {
    width: 27px;
    height: 100%;
    flex: none;
    margin-left: 6px;
    display: flex;
    align-items: center;
    justify-content: center;
    background: linear-gradient(#fdfdfd, #ececec);
    border: 1px solid #b9b9b9;
    border-radius: 3px;
}

.sq-btn svg {
    width: 20px;
    height: 20px;
}

.dd {
    width: 27px;
    height: 20px;
    flex: none;
    margin-left: 9px;
}

.check {
    width: 17px;
    height: 17px;
    flex: none;
    display: block;
    background-color: #fff;
    border: 1px solid #c0c0c0;
    border-radius: 1px;
}

.check svg {
    display: block;
    width: 15px;
    height: 15px;
}

.check.off {
    background-color: #ededed;
    border-color: #d2d2d2;
}

.chk-label {
    margin-left: 6px;
    color: #333;
    font-size: 12.300px;
}

.chk-label.grow {
    flex: 1;
}

.chk-label.muted {
    color: #8b8b8b;
}

.collapsed {
    height: 27.700px;
    display: flex;
    align-items: center;
    padding-left: 2px;
    font-weight: 700;
    font-size: 13px;
    line-height: 14px;
    color: #1b1b1b;
}

.collapsed .check {
    margin-right: 9px;
    margin-left: -1px;
}

.collapsed.muted {
    color: #8b8b8b;
}

.first-collapsed {
    margin-top: 3px;
}

.scrollbar {
    width: 17px;
    flex: none;
    display: flex;
    flex-direction: column;
    border-left: 1px solid #d0d0d0;
}

.sb-btn {
    height: 15px;
    flex: none;
    display: flex;
    align-items: center;
    justify-content: center;
    background-color: #f5f5f5;
}

.sb-thumb {
    height: 410px;
    flex: none;
    background-color: #f7f7f7;
    border-top: 1px solid #d9d9d9;
    border-bottom: 1px solid #cfcfcf;
}

.sb-track {
    flex: 1;
    background-color: #dcdcdc;
}

/* status bar */
.statusbar {
    height: 29px;
    display: flex;
    align-items: center;
    padding-left: 1371px;
    border-top: 1px solid #c8c8c8;
    font-size: 12.500px;
    color: #333;
    white-space: nowrap;
}

.st-x, .st-y { width: 106px; flex: none; }
.st-page { width: 106px; flex: none; }

.zoom-combo {
    width: 123px;
    height: 24px;
    flex: none;
    display: flex;
    align-items: center;
    justify-content: space-between;
    padding: 0 10px 0 3px;
    background: linear-gradient(90deg, #fff 78%, #ececec 78%);
    border: 1px solid #adadad;
    border-radius: 3px;
    color: #222;
}

.zoom-slider {
    width: 97px;
    height: 8px;
    flex: none;
    margin-left: 9px;
    position: relative;
    background-color: #e0e0e0;
    border: 1px solid #c4c4c4;
    border-radius: 4px;
}

.slider-fill {
    position: absolute;
    left: 0;
    top: 0;
    bottom: 0;
    width: 6px;
    background-color: #3d7fb5;
    border-radius: 3px;
}

.slider-knob {
    position: absolute;
    left: 4px;
    top: -6px;
    width: 14px;
    height: 18px;
    background-color: #f6f6f6;
    border: 1px solid #adadad;
    border-radius: 3px;
}

.desktop-strip {
    height: 3px;
    background: linear-gradient(90deg, #d5e2e9 0%, #dfe4e6 40%, #ecdcd8 55%, #e0e2e6 80%);
}
```
